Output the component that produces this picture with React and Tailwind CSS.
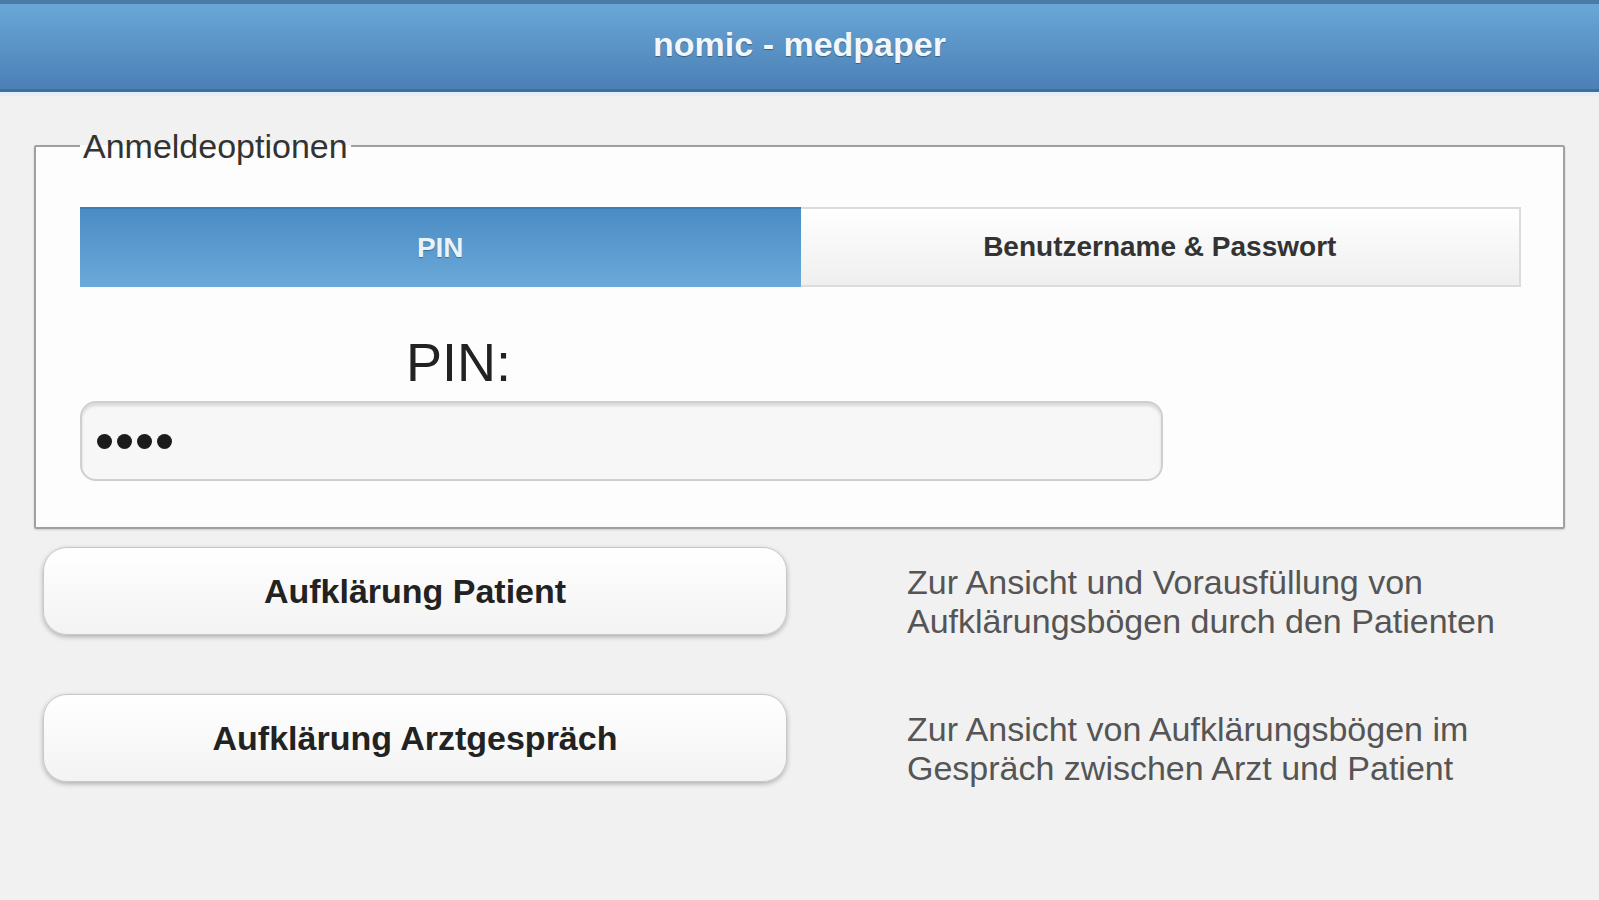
import { useState } from 'react';

const FONT = 'font-["Liberation_Sans",Arial,sans-serif]';

function ModeButton({ label }) {
  return (
    <button
      type="button"
      className="h-[88px] w-[744px] shrink-0 rounded-[24px] border border-[#c8c8c8] bg-gradient-to-b from-[#ffffff] to-[#f3f3f3] text-[34px] font-bold text-[#222] shadow-[0_2px_5px_rgba(0,0,0,0.28)]"
    >
      {label}
    </button>
  );
}

function ModeRow({ label, description }) {
  return (
    <div className="flex items-start">
      <ModeButton label={label} />
      <p className="ml-[120px] mt-[16px] flex-1 pr-[40px] text-[34px] leading-[39px] text-[#555]">{description}</p>
    </div>
  );
}

export default function App() {
  const [tab, setTab] = useState('pin');

  return (
    <div className={`min-h-screen bg-[#f1f1f1] ${FONT}`}>
      {/* Header */}
      <header className="border-t-[4px] border-[#4a7aa8]">
        <div className="flex h-[88px] items-center justify-center border-b-[3px] border-[#3f6f9f] bg-gradient-to-b from-[#6aa7d7] to-[#4b80b6] pb-[5px]">
          <h1 className="text-[34px] font-bold text-[#f2f7fc] [text-shadow:0_1px_1px_rgba(0,0,0,0.35)]">nomic - medpaper</h1>
        </div>
        <div className="h-[4px] bg-[#e4eef8]" />
      </header>

      <main className="px-[34px] pt-[31px]">
        {/* Login options */}
        <fieldset className="rounded-[2px] border-2 border-[#a0a0a0] bg-[#fdfdfd] pb-[46px] pl-[44px] pr-[42px] pt-[42px] shadow-[0_1px_2px_rgba(0,0,0,0.15)]">
          <legend className="px-[3px] text-[34px] leading-[38px] text-[#333]">Anmeldeoptionen</legend>

          <div className="grid h-[80px] grid-cols-2">
            <button
              type="button"
              onClick={() => setTab('pin')}
              className={
                tab === 'pin'
                  ? 'border-t-2 border-[#3f7db5] bg-gradient-to-b from-[#4b8cc5] to-[#6aa9d8] text-[28px] font-bold text-[#eaf3fb] [text-shadow:0_1px_1px_rgba(0,0,0,0.3)]'
                  : 'border-2 border-[#dcdcdc] bg-gradient-to-b from-[#ffffff] to-[#efefef] text-[28px] font-bold text-[#333]'
              }
            >
              PIN
            </button>
            <button
              type="button"
              onClick={() => setTab('user')}
              className={
                tab === 'user'
                  ? 'border-t-2 border-[#3f7db5] bg-gradient-to-b from-[#4b8cc5] to-[#6aa9d8] text-[28px] font-bold text-[#eaf3fb] [text-shadow:0_1px_1px_rgba(0,0,0,0.3)]'
                  : 'border-2 border-l-0 border-[#dcdcdc] bg-gradient-to-b from-[#ffffff] to-[#efefef] text-[28px] font-bold text-[#333]'
              }
            >
              Benutzername &amp; Passwort
            </button>
          </div>

          <label className="mt-[45px] block pl-[326px] text-[54px] leading-[60px] text-[#222]">PIN:</label>
          <div className="mt-[9px] flex h-[80px] w-[1083px] items-center gap-[5px] rounded-[16px] border-2 border-[#cfcfcf] bg-[#f7f7f7] pl-[15px] shadow-[inset_0_3px_3px_rgba(0,0,0,0.12)]">
            <span className="h-[15px] w-[15px] rounded-full bg-[#1c1c1c]" />
            <span className="h-[15px] w-[15px] rounded-full bg-[#1c1c1c]" />
            <span className="h-[15px] w-[15px] rounded-full bg-[#1c1c1c]" />
            <span className="h-[15px] w-[15px] rounded-full bg-[#1c1c1c]" />
          </div>
        </fieldset>

        {/* Modes */}
        <div className="ml-[9px] mt-[18px] flex flex-col gap-[53px]">
          <ModeRow
            label="Aufklärung Patient"
            description="Zur Ansicht und Vorausfüllung von Aufklärungsbögen durch den Patienten"
          />
          <ModeRow
            label="Aufklärung Arztgespräch"
            description="Zur Ansicht von Aufklärungsbögen im Gespräch zwischen Arzt und Patient"
          />
        </div>
      </main>
    </div>
  );
}
